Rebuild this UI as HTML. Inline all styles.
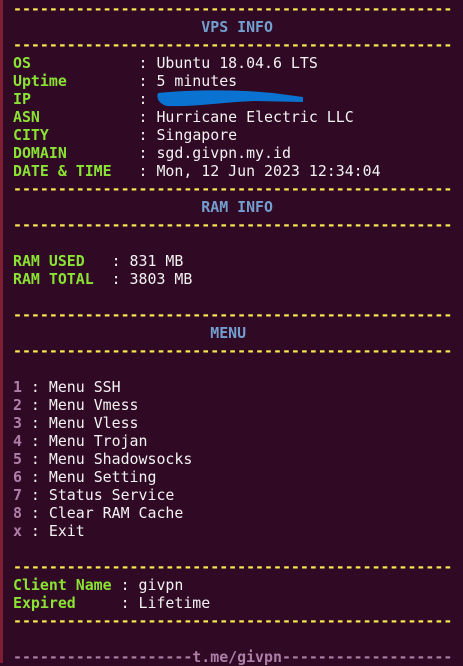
<!DOCTYPE html>
<html><head><meta charset="utf-8"><style>
html,body{margin:0;padding:0;}
body{width:463px;height:663px;background:#300a24;overflow:hidden;position:relative;}
.strip{position:absolute;left:0;top:0;width:3px;height:663px;background:#7e1d33;}
pre{margin:0;position:absolute;left:13px;top:0;font-family:"DejaVu Sans Mono","Liberation Mono",monospace;font-size:14.9px;line-height:18px;color:#f2f2f2;letter-spacing:0;}
.y{color:#fce94f;font-weight:bold}.b{color:#729fcf;font-weight:bold}.g{color:#8ae234;font-weight:bold}.p{color:#ad7fa8;font-weight:bold}
.scrib{position:absolute;left:155px;top:89px;width:150px;height:18px;}
</style></head><body>
<div class="strip"></div>
<pre><span class="y">-------------------------------------------------</span>
                     <span class="b">VPS INFO</span>
<span class="y">-------------------------------------------------</span>
<span class="g">OS</span>            : Ubuntu 18.04.6 LTS
<span class="g">Uptime</span>        : 5 minutes
<span class="g">IP</span>            :
<span class="g">ASN</span>           : Hurricane Electric LLC
<span class="g">CITY</span>          : Singapore
<span class="g">DOMAIN</span>        : sgd.givpn.my.id
<span class="g">DATE &amp; TIME</span>   : Mon, 12 Jun 2023 12:34:04
<span class="y">-------------------------------------------------</span>
                     <span class="b">RAM INFO</span>
<span class="y">-------------------------------------------------</span>

<span class="g">RAM USED</span>   : 831 MB
<span class="g">RAM TOTAL</span>  : 3803 MB

<span class="y">-------------------------------------------------</span>
                      <span class="b">MENU</span>
<span class="y">-------------------------------------------------</span>

<span class="p">1</span> : Menu SSH
<span class="p">2</span> : Menu Vmess
<span class="p">3</span> : Menu Vless
<span class="p">4</span> : Menu Trojan
<span class="p">5</span> : Menu Shadowsocks
<span class="p">6</span> : Menu Setting
<span class="p">7</span> : Status Service
<span class="p">8</span> : Clear RAM Cache
<span class="p">x</span> : Exit

<span class="y">-------------------------------------------------</span>
<span class="g">Client Name</span> : givpn
<span class="g">Expired</span>     : Lifetime
<span class="y">-------------------------------------------------</span>

<span class="p">--------------------t.me/givpn-------------------</span></pre>
<svg class="scrib" viewBox="0 0 150 18"><path d="M3 4 C40 0 90 1 118 4 L148 8 L148 13 L100 12 C70 13 40 18 12 17 C4 15 1 9 3 4Z" fill="#0a72d0"/></svg>
</body></html>
